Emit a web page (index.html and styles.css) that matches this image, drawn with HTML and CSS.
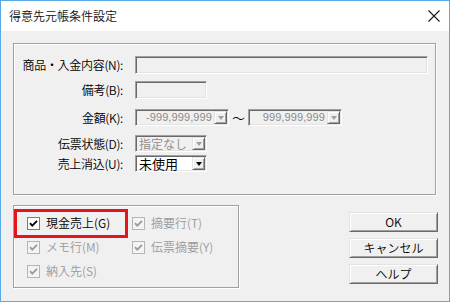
FILE: index.html
```html
<!DOCTYPE html>
<html lang="ja">
<head>
    <meta charset="UTF-8">
    <title>得意先元帳条件設定</title>
    <link rel="stylesheet" href="styles.css">
</head>
<body>
    <div class="window">
        <!-- Title bar -->
        <div class="titlebar">
            <span class="title">得意先元帳条件設定</span>
            <svg class="close" width="12" height="12" viewBox="0 0 12 12">
                <path d="M0.5 0.5 L11.5 11.5 M11.5 0.5 L0.5 11.5" stroke="#1a1a1a" stroke-width="1.1" fill="none"/>
            </svg>
        </div>

        <div class="content">
            <!-- Conditions -->
            <div class="group conditions">
                <div class="row row-n">
                    <span class="label">商品・入金内容(N):</span>
                    <div class="edit edit-wide"></div>
                </div>
                <div class="row row-b">
                    <span class="label">備考(B):</span>
                    <div class="edit edit-short"></div>
                </div>
                <div class="row row-k">
                    <span class="label">金額(K):</span>
                    <div class="combo combo-num disabled">
                        <span class="value">-999,999,999</span>
                        <span class="drop"><span class="arrow"></span></span>
                    </div>
                    <span class="tilde">〜</span>
                    <div class="combo combo-num disabled">
                        <span class="value">999,999,999</span>
                        <span class="drop"><span class="arrow"></span></span>
                    </div>
                </div>
                <div class="row row-d">
                    <span class="label">伝票状態(D):</span>
                    <div class="combo combo-state disabled">
                        <span class="value">指定なし</span>
                        <span class="drop"><span class="arrow"></span></span>
                    </div>
                </div>
                <div class="row row-u">
                    <span class="label">売上消込(U):</span>
                    <div class="combo combo-clear">
                        <span class="value">未使用</span>
                        <span class="drop"><span class="arrow"></span></span>
                    </div>
                </div>
            </div>

            <div class="bottom">
                <!-- Options -->
                <div class="group options">
                    <div class="check">
                        <svg class="box" width="13" height="13" viewBox="0 0 13 13">
                            <rect x="0.5" y="0.5" width="12" height="12" fill="#fff" stroke="#7a7a7a"/>
                            <path d="M3 6.2 L5.3 8.6 L10 3.8" stroke="#000" stroke-width="1.8" fill="none"/>
                        </svg>
                        <span>現金売上(G)</span>
                    </div>
                    <div class="check disabled">
                        <svg class="box" width="13" height="13" viewBox="0 0 13 13">
                            <rect x="0.5" y="0.5" width="12" height="12" fill="#f4f4f4" stroke="#b5b5b5"/>
                            <path d="M3 6.2 L5.3 8.6 L10 3.8" stroke="#9a9a9a" stroke-width="1.8" fill="none"/>
                        </svg>
                        <span>摘要行(T)</span>
                    </div>
                    <div class="check disabled">
                        <svg class="box" width="13" height="13" viewBox="0 0 13 13">
                            <rect x="0.5" y="0.5" width="12" height="12" fill="#f4f4f4" stroke="#b5b5b5"/>
                            <path d="M3 6.2 L5.3 8.6 L10 3.8" stroke="#9a9a9a" stroke-width="1.8" fill="none"/>
                        </svg>
                        <span>メモ行(M)</span>
                    </div>
                    <div class="check disabled">
                        <svg class="box" width="13" height="13" viewBox="0 0 13 13">
                            <rect x="0.5" y="0.5" width="12" height="12" fill="#f4f4f4" stroke="#b5b5b5"/>
                            <path d="M3 6.2 L5.3 8.6 L10 3.8" stroke="#9a9a9a" stroke-width="1.8" fill="none"/>
                        </svg>
                        <span>伝票摘要(Y)</span>
                    </div>
                    <div class="check disabled">
                        <svg class="box" width="13" height="13" viewBox="0 0 13 13">
                            <rect x="0.5" y="0.5" width="12" height="12" fill="#f4f4f4" stroke="#b5b5b5"/>
                            <path d="M3 6.2 L5.3 8.6 L10 3.8" stroke="#9a9a9a" stroke-width="1.8" fill="none"/>
                        </svg>
                        <span>納入先(S)</span>
                    </div>

                    <!-- annotation -->
                    <div class="highlight"></div>
                </div>

                <!-- Buttons -->
                <div class="buttons">
                    <div class="btn">OK</div>
                    <div class="btn">キャンセル</div>
                    <div class="btn">ヘルプ</div>
                </div>
            </div>
        </div>
    </div>
</body>
</html>
```

FILE: styles.css
```css
/* General */
* {
    box-sizing: border-box;
}

body {
    margin: 0;
    padding: 0;
    font-family: "Noto Sans CJK JP", "Noto Sans", sans-serif;
    font-size: 12px;
    font-weight: 350;
    line-height: 16px;
    color: #000;
}

.window {
    width: 450px;
    height: 302px;
    border: 1px solid #5aa8e6;
    display: flex;
    flex-direction: column;
    background-color: #f0f0f0;
}

/* Title bar */
.titlebar {
    height: 30px;
    background-color: #fff;
    display: flex;
    align-items: center;
    justify-content: space-between;
    padding: 0 9px 0 8px;
}

.title {
    font-size: 12px;
    color: #111;
}

.close {
    display: block;
}

/* Content */
.content {
    flex: 1;
    padding: 12px 0 0 12px;
}

.group {
    border: 1px solid #a0a0a0;
    box-shadow: inset 1px 1px #fff, 1px 1px #fff;
}

.conditions {
    width: 423px;
    height: 152px;
}

.row {
    display: flex;
    align-items: center;
}

.label {
    width: 109px;
    margin-right: 12px;
    text-align: right;
    white-space: nowrap;
    letter-spacing: -0.3px;
}

.row-n {
    margin-top: 12px;
}

.row-b {
    margin-top: 7px;
}

.row-k {
    margin-top: 10px;
}

.row-d {
    margin-top: 9px;
}

.row-u {
    margin-top: 3px;
}

/* Edit boxes */
.edit {
    height: 18px;
    background-color: #f0f0f0;
    border: 1px solid;
    border-color: #a0a0a0 #fff #fff #a0a0a0;
    box-shadow: inset 1px 1px #696969, inset -1px -1px #e3e3e3;
}

.edit-wide {
    width: 293px;
}

.edit-short {
    width: 72px;
}

/* Combo boxes */
.combo {
    height: 17px;
    display: flex;
    align-items: stretch;
    background-color: #fff;
    border: 1px solid;
    border-color: #a0a0a0 #fff #fff #a0a0a0;
    box-shadow: inset 1px 1px #696969, inset -1px -1px #e3e3e3;
    padding: 1px;
}

.combo.disabled {
    background-color: #f0f0f0;
    color: #8a8a8a;
}

.combo .value {
    flex: 1;
    padding-left: 2px;
    line-height: 13px;
    white-space: nowrap;
}

.combo-num {
    width: 94px;
}

.combo-num .value {
    font-family: "Liberation Sans", Arial, sans-serif;
    font-size: 11px;
    font-weight: 400;
    text-align: right;
    padding-right: 2px;
    letter-spacing: 0.1px;
}

.combo-state {
    width: 72px;
}

.combo-clear {
    width: 72px;
}

.combo-clear .value {
    font-size: 13px;
    font-weight: 400;
}

.drop {
    width: 13px;
    background-color: #f0f0f0;
    border: 1px solid;
    border-color: #e3e3e3 #696969 #696969 #e3e3e3;
    box-shadow: inset 1px 1px #fff, inset -1px -1px #a0a0a0;
    display: flex;
    align-items: center;
    justify-content: center;
}

.arrow {
    width: 0;
    height: 0;
    border-left: 3.5px solid transparent;
    border-right: 3.5px solid transparent;
    border-top: 4px solid #000;
}

.disabled .arrow {
    border-top-color: #a0a0a0;
}

.tilde {
    width: 19px;
    text-align: center;
    font-size: 13px;
}

/* Bottom area */
.bottom {
    display: flex;
    margin-top: 10px;
}

.options {
    position: relative;
    width: 226px;
    height: 83px;
    display: grid;
    grid-template-columns: 105px 1fr;
    grid-auto-rows: 16px;
    row-gap: 8px;
    padding: 9px 0 0 13px;
    align-content: start;
}

.check {
    display: flex;
    align-items: center;
    gap: 6px;
    white-space: nowrap;
}

.check .box {
    display: block;
    flex-shrink: 0;
}

.check.disabled {
    color: #9a9a9a;
}

.highlight {
    position: absolute;
    left: 0;
    top: 3px;
    width: 114px;
    height: 29px;
    border: 3px solid #e0161c;
}

/* Buttons */
.buttons {
    margin-left: auto;
    margin-right: 11px;
    margin-top: 7px;
    display: flex;
    flex-direction: column;
    gap: 6px;
}

.btn {
    width: 89px;
    height: 20px;
    background-color: #f0f0f0;
    border: 1px solid;
    border-color: #e3e3e3 #696969 #696969 #e3e3e3;
    box-shadow: inset 1px 1px #fff, inset -1px -1px #a0a0a0;
    text-align: center;
    line-height: 17px;
}
```
